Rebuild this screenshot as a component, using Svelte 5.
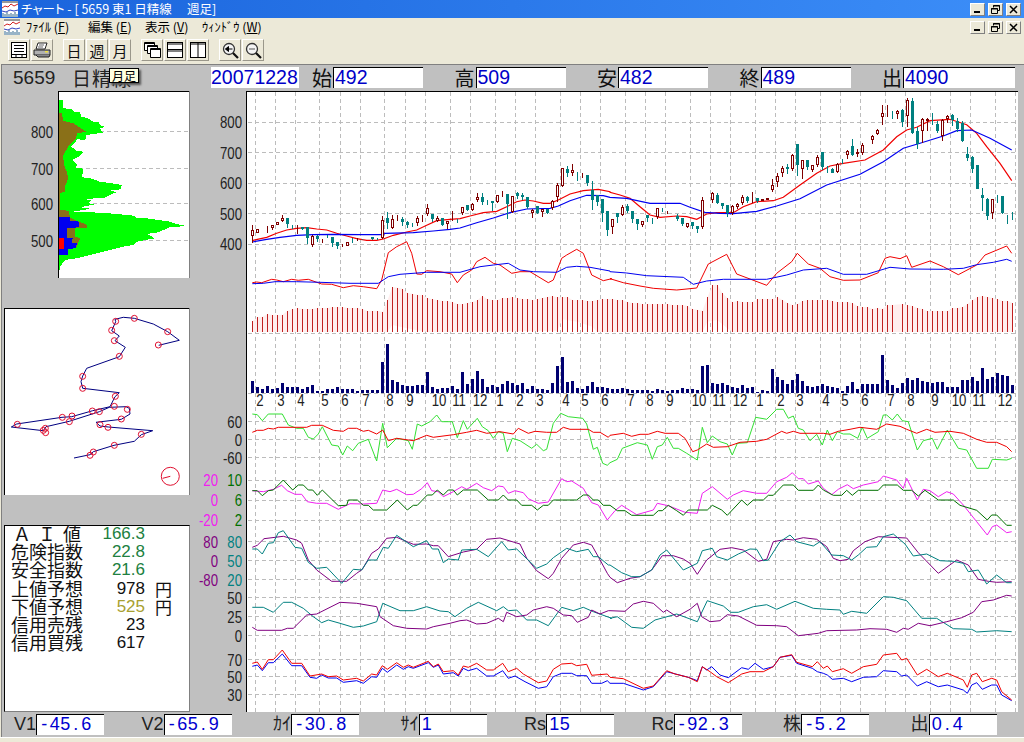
<script>
  // coordinates below were read off at 3x, so z() brings them back to page pixels
  const z = (ox, oy, s) =>
    s.trim().split(/\s+/).map((p) => {
      const [a, b] = p.split(',');
      return (ox + a / 3).toFixed(1) + ',' + (oy + b / 3).toFixed(1);
    }).join(' ');
  const top2 = (a, b) => z(200, 90, a) + ' ' + z(610, 90, b);
  const low2 = (a, b) => z(200, 400, a) + ' ' + z(610, 400, b);

  const vLines = [255.5,275.5,295.5,319.5,340.5,360.5,384.5,405.5,425.5,450.5,470.5,495.5,515.5,535.5,560.5,580.5,600.5,625.5,645.5,665.5,690.5,710.5,730.5,755.5,775.5,795.5,820.5,840.5,860.5,885.5,905.5,930.5,950.5,970.5,995.5,1015.5];
  const hLines = [122.5,152.5,183.5,213.5,244.5,333.5,393.5,421.5,439.5,457.5,480.5,500.5,520.5,541.5,560.5,579.5,597.5,616.5,635.5,659.5,676.5,694.5];

  const axis = [
    ['800',242,122,'#222'],['700',242,153,'#222'],['600',242,183,'#222'],['500',242,214,'#222'],['400',242,244,'#222'],
    ['60',242,422,'#222'],['0',242,440,'#222'],['-60',242,458,'#222'],
    ['20',218,480,'#f020f0'],['0',218,500,'#f020f0'],['-20',218,520,'#f020f0'],
    ['10',242,480,'#007000'],['6',242,500,'#007000'],['2',242,520,'#007000'],
    ['80',218,542,'#800080'],['0',218,561,'#800080'],['-80',218,580,'#800080'],
    ['80',242,542,'#008080'],['50',242,561,'#008080'],['20',242,580,'#008080'],
    ['50',242,598,'#222'],['25',242,617,'#222'],['0',242,636,'#222'],
    ['70',242,660,'#222'],['50',242,677,'#222'],['30',242,695,'#222']
  ];

  const months = [
    [260,'2'],[281,'3'],[301,'4'],[325,'5'],[345,'6'],[366,'7'],[390,'8'],[410,'9'],[439,'10'],[459,'11'],[480,'12'],[500,'1'],[520,'2'],[540,'3'],[566,'4'],[585,'5'],[605,'6'],
    [631,'7'],[650,'8'],[670,'9'],[699,'10'],[719,'11'],[740,'12'],[760,'1'],[781,'2'],[800,'3'],[826,'4'],[845,'5'],[865,'6'],[891,'7'],[911,'8'],[935,'9'],[959,'10'],[979,'11'],[1005,'12']
  ];

  // body top, body bottom, high, low (3x y, page y = 90 + v/3); one bar every 5px
  const candleData = `u420,438,405,458 u418,430,418,430 - u414,416,408,428 u406,414,406,420 u397,405,397,405 u384,394,376,396 d384,403,384,414
    d410,413,405,416 u413,418,405,432 d412,418,410,420 d412,443,412,462 u438,466,436,470 d438,448,436,455 u448,450,448,460 d438,440,434,444
    d441,458,441,470 d456,468,456,478 u464,466,462,472 u455,468,455,468 d445,447,445,458 u446,448,444,452 d447,448,447,450 d446,447,446,448
    d442,446,442,450 d445,447,445,450 u390,445,378,448 d384,400,366,416 u388,413,374,416 u384,387,376,392 d386,396,380,408 d397,405,394,414
    d404,405,398,412 u384,398,378,408 u378,382,376,396 u354,372,342,378 d373,388,373,396 u383,392,378,396 d385,404,385,408 u394,403,392,418
    u386,388,364,392 d386,388,386,398 u352,368,350,374 d346,360,346,364 u342,360,338,362 u321,330,310,336 d321,336,310,344 d331,333,331,344
    d334,338,334,364 u316,336,316,340 u308,312,304,320 d313,343,313,386 u318,365,318,368 d308,318,306,328 d316,320,308,330 d322,352,322,356
    u360,368,358,384 d348,370,348,372 u358,367,356,380 d358,368,356,372 u332,355,330,360 u285,320,280,335 u233,288,233,290 d236,250,228,262
    u240,248,222,258 d245,247,245,272 u254,258,250,264 d255,280,255,288 d300,330,274,360 d316,335,316,348 d328,370,328,396 d364,420,364,438
    u388,410,388,432 d370,382,370,398 u350,375,345,378 d348,362,342,368 d364,388,364,398 d388,402,388,420 u394,404,392,412 d376,384,376,396
    d384,385,384,402 u355,382,355,388 d355,358,355,366 u366,367,362,372 - d378,386,372,392 d384,402,384,408 u400,410,400,414
    d396,408,396,418 d408,418,408,428 u330,410,322,416 - u308,330,305,338 d314,338,310,342 d338,348,338,356 d346,370,346,380
    u348,370,346,376 u342,352,340,356 u320,340,316,344 d320,332,318,340 u324,326,305,340 d325,334,325,340 u328,334,328,334 u323,330,323,330
    u286,300,268,306 u258,276,250,290 u233,248,228,262 d232,236,222,252 u194,238,192,242 d162,225,162,258 u211,238,211,268 d211,232,211,240
    u224,241,224,246 u200,224,196,230 d187,230,187,240 d238,239,228,250 d236,248,234,250 u222,246,220,248 d208,210,206,222 u182,196,180,206
    d168,194,146,198 u186,192,176,202 u164,188,160,194 - u138,150,134,162 u120,132,118,134 u70,80,46,104 u60,64,44,80
    d64,66,64,86 u62,72,60,88 d60,96,56,110 u30,78,24,110 d32,128,24,132 d122,162,112,176 u86,122,84,160 u88,92,84,122
    d90,92,68,104 d102,124,94,128 u90,138,88,152 u78,88,74,100 d74,90,72,108 d92,118,84,126 d98,152,94,156 d192,204,170,214
    d202,236,198,248 d226,296,226,298 d314,324,294,364 d326,378,324,390 u328,368,326,386 d316,317,316,338 d318,368,318,372 d376,377,376,402 d378,379,366,390`;

  const px = (i) => Math.round(252.33 + 5 * i);
  const candles = candleData.trim().split(/\s+/).map((c, i) => {
    if (c === '-') return null;
    const [t, b, h, l] = c.slice(1).split(',').map((v) => Math.round(90 + v / 3));
    return { x: px(i), up: c[0] === 'u', t, b, h, l };
  }).filter(Boolean);

  const macdTops = [694,682,680,672,675,675,674,662,658,654,657,657,657,654,654,654,651,651,651,654,654,654,657,663,663,663,665,630,591,593,596,609,611,614,616,624,628,630,633,633,636,642,642,639,636,630,618,628,630,630,624,624,621,624,627,627,630,627,624,621,618,622,621,621,630,630,630,633,633,630,627,627,627,630,630,636,639,639,642,642,642,642,642,642,645,645,645,648,657,659,662,621,585,585,609,624,636,633,636,636,636,627,627,627,627,621,630,639,645,642,633,630,630,630,630,630,633,636,636,636,639,648,651,651,657,654,657,645,645,0,642,645,648,654,657,663,663,663,663,663,654,654,651,642,630,621,618,621,624,627,633,633,639];
  const macd = macdTops.map((t, i) => ({ x: px(i) + 0.5, y: 90 + t / 3 })).filter((b) => b.y > 200);
  const macdBand = macd.map((b) => b.x + ',' + b.y.toFixed(1)).join(' ');
  // lower edge of the pink band, lifts off the base where the bars are tallest
  const macdFloor = z(200, 90, '1252,726 1192,726 1177,710 1132,695 1087,688 1072,722 682,726 637,718 607,712 577,705 562,726 157,726');
  const macdFloorRight = z(610, 90, '1207,726 367,726 352,715 322,690 292,695 277,726 7,726');

  const volTops = [873,892,897,888,897,893,879,890,890,890,897,890,885,903,903,897,897,891,897,897,897,902,900,900,900,900,816,762,870,876,885,889,889,884,884,846,891,896,895,895,888,897,846,882,867,843,867,892,885,890,882,873,879,885,879,897,888,897,897,900,879,828,801,876,873,894,897,888,876,891,891,894,897,897,894,896,900,900,900,900,903,897,900,903,900,900,894,898,896,900,828,825,880,882,879,885,891,894,885,894,891,906,900,903,837,861,870,882,870,852,873,888,891,888,882,888,891,894,903,888,876,897,882,882,882,882,795,870,885,894,879,864,870,864,873,876,879,876,876,891,891,891,870,870,861,873,834,867,861,849,855,857,885];
  const vols = volTops.map((t, i) => ({ x: px(i) - 1, y: Math.round(90 + t / 3) }));

  const series = [
    { c: '#f00000', w: 1.2, p: top2('157,452 172,448 200,442 230,430 260,420 290,415 320,413 350,417 380,420 410,430 440,438 470,446 500,451 530,451 550,447 580,436 620,426 650,420 680,406 710,392 750,388 780,386 810,378 850,368 890,364 920,350 950,335 975,330 1000,333 1030,340 1050,340 1075,330 1110,312 1150,302 1195,298 1230,305', '0,307 30,315 60,325 90,350 120,375 150,382 200,378 230,380 260,388 290,372 320,368 370,368 400,350 440,335 490,332 520,322 570,285 620,250 660,228 700,220 765,210 820,180 860,140 890,120 920,112 960,92 1020,88 1070,104 1100,130 1130,170 1170,220 1205,272') },
    { c: '#0000f0', w: 1.2, p: top2('157,456 200,448 240,442 290,436 340,434 400,433 480,434 550,434 555,430 640,428 700,423 750,418 780,414 830,398 880,384 930,368 980,357 1050,355 1075,348 1110,332 1160,316 1210,317', '0,322 50,325 120,340 210,340 240,352 285,367 330,370 370,371 440,364 500,348 570,326 650,285 750,253 820,215 880,175 930,160 1000,138 1040,122 1085,120 1140,145 1205,180') },
    { c: '#f00000', w: 1, p: top2('157,578 170,576 185,578 215,568 230,570 250,575 275,568 295,571 325,568 345,575 365,582 395,583 430,593 460,587 490,590 530,596 545,570 565,488 590,470 620,455 635,490 650,552 665,553 680,542 720,545 755,552 772,578 790,555 815,540 830,515 855,502 880,520 900,525 935,550 960,545 990,545 1045,578 1060,570 1085,505 1100,495 1130,478 1150,490 1175,555 1210,572 1235,566', '0,566 40,578 90,588 130,595 200,600 260,594 295,522 350,493 380,552 470,586 500,550 545,515 562,490 595,522 630,535 660,560 700,571 750,570 805,548 825,505 840,500 870,506 890,497 905,532 960,513 1000,530 1045,554 1100,525 1125,495 1190,468 1205,490') },
    { c: '#0000f0', w: 1, p: top2('157,581 190,580 225,575 290,575 360,577 450,580 535,580 565,560 600,553 680,547 780,547 840,530 880,525 925,520 960,540 1000,545 1070,547 1100,532 1130,529 1170,532 1230,543', '0,545 50,549 110,557 220,562 250,583 290,573 340,568 470,568 530,555 580,540 650,535 700,553 770,553 840,532 900,537 1000,538 1060,535 1100,524 1150,517 1190,508 1205,514') },
    { c: '#33e033', w: 1, p: low2('157,42 172,44 187,62 205,42 247,42 265,75 290,85 310,85 325,112 340,117 355,102 367,80 395,135 415,138 428,165 442,138 458,152 475,130 505,118 530,183 548,70 562,143 590,115 625,122 637,148 652,72 665,78 690,65 710,45 725,65 757,65 772,113 790,62 802,88 832,55 847,80 865,92 880,115 895,95 910,100 922,155 937,115 960,122 995,145 1010,133 1030,152 1040,148 1060,70 1082,40 1105,50 1148,55 1160,72 1180,148 1192,142 1208,190 1222,196', '0,188 22,178 37,145 82,128 112,135 127,178 142,140 157,135 172,112 190,145 205,145 230,160 262,180 277,82 292,128 307,108 330,125 352,132 367,165 382,130 412,128 437,52 470,58 500,28 520,28 535,55 550,48 565,85 580,90 600,122 620,103 637,135 652,90 667,122 682,95 700,102 720,102 743,115 757,82 772,115 805,95 820,45 830,45 847,60 862,42 877,62 895,65 922,150 940,122 967,115 982,148 1012,90 1045,145 1070,150 1100,205 1135,205 1147,178 1190,180 1205,175') },
    { c: '#f00000', w: 1, p: low2('157,97 172,91 190,91 205,85 220,87 235,82 285,82 320,82 335,76 367,76 400,91 430,94 445,85 470,85 490,94 505,91 530,102 548,90 565,122 590,115 640,122 680,106 700,112 760,104 800,97 830,91 860,100 900,95 940,102 955,85 985,100 1005,94 1040,97 1070,97 1090,82 1110,88 1165,88 1180,97 1200,97 1225,112', '0,106 40,100 65,109 90,103 115,103 142,94 165,100 205,100 225,115 248,155 262,150 290,132 310,142 352,140 390,127 440,124 470,118 515,94 530,100 550,94 570,100 640,100 660,103 685,94 720,88 750,82 800,88 830,72 870,79 890,88 920,100 950,88 975,97 1020,94 1060,100 1100,118 1130,127 1160,127 1190,140 1205,155') },
    { c: '#f020f0', w: 1, p: low2('157,272 190,275 220,268 245,256 262,272 285,283 305,283 322,305 350,310 380,310 415,328 450,311 490,312 530,310 548,270 570,275 590,268 620,284 640,283 665,266 682,248 695,272 715,275 730,290 760,275 785,260 800,268 830,250 850,263 875,272 895,258 910,260 925,280 945,272 970,278 985,296 1015,310 1045,306 1085,236 1100,245 1115,243 1150,265 1175,308 1195,315 1222,360', '0,350 15,332 35,316 80,344 130,330 142,310 175,317 225,337 262,340 277,280 307,260 352,298 370,285 400,272 440,280 470,280 500,245 530,232 547,218 565,236 580,236 595,252 625,243 640,265 665,284 685,268 712,254 730,266 760,255 805,245 820,228 860,240 880,265 890,235 922,300 940,268 960,272 985,290 1010,275 1030,282 1060,315 1100,365 1132,405 1147,380 1160,375 1190,398 1205,395') },
    { c: '#007000', w: 1, p: low2('157,272 172,272 187,287 205,272 220,270 250,240 278,270 295,255 310,255 325,270 338,270 352,286 367,270 415,317 440,316 445,300 472,300 490,316 505,316 520,330 560,330 592,300 622,330 640,316 652,316 682,285 697,285 712,270 730,285 745,270 760,270 772,285 790,270 832,270 865,300 895,300 910,285 925,300 950,300 965,316 995,316 1012,330 1030,316 1045,316 1060,300 1130,300 1150,285 1165,285 1180,300 1195,300 1210,316', '0,316 22,332 45,332 65,346 130,346 145,332 157,332 175,316 200,332 220,346 235,330 292,330 307,316 335,330 352,346 395,300 412,316 430,300 460,300 475,286 490,286 520,255 550,255 565,271 610,271 625,255 640,270 670,286 695,286 710,271 727,286 745,271 805,271 820,255 862,255 880,271 905,271 925,288 945,271 985,300 1030,300 1050,316 1100,331 1132,360 1145,345 1160,345 1190,376 1205,376') },
    { c: '#800080', w: 1, p: low2('157,442 172,436 192,416 250,409 290,420 305,430 325,480 350,510 395,544 440,544 470,520 487,508 515,460 535,447 560,415 590,412 640,433 680,432 700,437 715,437 745,470 790,456 830,448 860,418 900,414 960,432 980,475 1010,512 1045,536 1060,520 1085,475 1120,435 1150,427 1175,435 1195,470 1222,520', '0,532 22,548 60,535 90,530 125,510 157,467 190,467 220,477 240,490 262,523 290,480 330,448 365,443 400,450 445,484 470,478 490,425 530,418 550,420 580,413 620,418 650,440 670,475 690,482 715,478 730,452 765,425 805,410 890,414 925,458 985,520 1040,480 1075,495 1105,538 1135,544 1160,547 1205,545') },
    { c: '#008080', w: 1, p: low2('157,447 172,447 187,462 205,430 220,428 235,398 250,392 285,442 305,445 325,487 350,505 380,502 425,550 460,508 485,510 505,480 530,480 550,442 565,445 590,406 640,440 680,422 697,447 715,447 730,488 745,477 775,480 785,450 830,448 865,470 905,425 925,450 950,447 1010,505 1040,492 1060,473 1100,445 1130,455 1165,448 1180,470 1195,470 1225,495', '0,495 35,518 65,530 90,530 125,510 150,465 170,450 220,510 262,490 277,452 307,445 320,470 352,480 385,462 420,447 440,448 460,482 475,480 510,425 540,405 560,425 610,438 630,425 665,465 700,467 725,480 745,465 770,442 800,440 820,410 850,402 885,432 910,468 950,462 990,482 1030,484 1060,490 1075,515 1105,510 1130,552 1160,525 1190,548 1205,548') },
    { c: '#008080', w: 1, p: low2('157,622 190,622 220,637 250,607 275,607 310,625 340,650 365,668 385,660 420,670 460,682 490,678 530,665 548,610 600,632 640,632 680,620 720,633 745,635 765,650 800,625 835,607 890,632 910,620 925,632 950,630 980,660 1010,660 1045,677 1085,622 1120,632 1150,622 1180,635 1235,655', '0,655 22,650 65,682 100,685 135,660 200,642 262,665 292,602 340,618 362,637 385,637 430,620 470,614 500,628 555,604 610,625 650,628 690,630 700,643 725,634 770,640 820,590 850,592 890,602 935,655 980,655 1030,686 1085,688 1100,696 1160,692 1205,695') },
    { c: '#800080', w: 1, p: low2('157,682 172,691 245,691 262,685 280,685 320,645 350,642 420,607 470,610 530,620 540,650 580,677 620,685 680,687 700,680 750,670 780,662 800,660 830,672 860,670 895,655 910,665 920,637 950,650 980,645 1000,630 1040,620 1060,625 1090,645 1115,647 1132,667 1165,652 1175,630 1200,642 1225,632', '0,632 45,634 70,612 100,604 130,610 160,637 170,630 200,650 240,628 262,610 275,650 300,665 330,662 352,644 385,648 440,676 500,677 530,680 565,707 625,700 650,692 740,690 780,686 830,688 860,697 880,685 895,688 925,670 960,677 1010,665 1055,653 1090,637 1115,605 1150,600 1190,586 1205,588') },
    { c: '#0000f0', w: 1, p: low2('157,799 172,795 187,812 205,788 220,788 247,762 275,797 305,797 330,832 350,835 365,825 385,834 410,834 430,847 470,842 490,850 515,830 530,832 547,805 562,817 590,795 610,808 625,800 640,805 685,788 700,802 715,795 730,822 760,818 775,828 790,805 805,812 830,805 860,828 880,828 908,812 925,835 945,828 975,845 1015,865 1040,860 1060,830 1085,820 1115,820 1130,827 1160,827 1175,850 1205,850 1222,842', '0,850 40,850 100,870 130,860 170,815 235,832 262,842 277,800 290,810 305,800 330,825 355,833 395,803 415,808 435,790 460,808 490,800 510,772 545,766 560,790 607,805 622,815 640,820 652,825 667,838 700,835 725,845 760,832 800,830 820,812 860,815 875,828 890,825 922,858 950,845 985,860 1012,855 1060,870 1072,880 1085,855 1100,848 1117,868 1145,855 1160,855 1175,885 1205,902') },
    { c: '#f00000', w: 1, p: low2('157,790 172,786 187,808 205,779 220,779 247,750 275,790 305,790 330,828 365,822 385,830 410,828 430,840 470,835 490,843 515,822 530,825 547,797 562,808 590,788 610,802 625,795 640,802 685,784 700,800 715,792 730,815 760,812 775,825 790,798 805,802 830,790 860,810 880,810 908,790 925,815 950,805 970,822 1015,848 1040,843 1060,808 1085,792 1115,790 1130,797 1160,793 1175,826 1222,822', '0,832 40,836 100,865 130,858 170,812 195,822 235,832 262,845 277,800 300,815 320,830 355,848 395,822 420,815 460,815 490,800 510,772 545,764 560,787 607,800 622,785 640,805 652,798 667,815 700,806 725,820 760,800 800,793 820,765 860,760 875,780 890,775 922,825 950,808 985,830 1012,820 1060,840 1072,862 1085,825 1100,820 1117,845 1145,835 1160,840 1175,875 1205,900') }
  ];

  const histGreen = z(0, 90, '176,30 188,30 190,54 214,58 222,66 240,66 244,80 262,84 280,95 296,96 300,105 315,110 300,116 310,128 280,132 258,135 256,150 232,148 226,156 214,170 230,182 250,185 240,198 216,210 232,224 226,232 250,236 246,262 268,264 300,275 336,280 365,285 362,298 330,302 350,306 310,325 252,326 275,332 262,340 290,342 240,352 272,356 220,365 300,368 352,372 410,378 400,382 440,385 510,395 530,402 560,408 510,412 470,428 440,432 465,445 410,455 400,465 370,470 330,480 290,490 230,505 195,510 180,530 176,560');
  const histBrown = z(0, 90, '176,70 185,70 190,92 220,100 258,125 232,130 225,150 205,170 190,195 190,205 192,225 200,245 205,265 195,290 195,305 180,310 180,360 205,362 210,382 230,392 262,405 262,414 225,415 225,440 240,445 230,470 176,480');
  const histBlue = z(0, 90, '176,382 210,382 210,392 238,395 236,412 200,415 200,445 218,445 216,458 230,460 228,474 204,478 204,494 176,494');
  const histRed = z(0, 90, '176,445 192,445 192,478 176,478');
  const histAxis = [['800', 132], ['700', 169], ['600', 204], ['500', 241]];

  const path = z(0, 300, '222,474 270,464 280,455 342,436 403,424 424,404 458,392 325,381 300,378 288,367 364,358 390,342 388,325 378,320 328,322 298,335 208,364 138,380 130,392 34,381 50,372 186,352 215,350 278,332 330,320 345,290 358,278 248,265 243,245 248,228 260,205 358,170 376,142 345,122 358,108 335,92 347,65 345,58 370,52 403,55 460,72 503,95 538,121 476,136');
  const rings = [[475,135],[503,95],[403,55],[347,64],[335,91],[343,122],[358,169],[248,229],[248,265],[346,289],[343,319],[382,328],[364,357],[300,374],[324,382],[424,403],[343,436],[280,456],[270,466],[137,398],[130,391],[136,385],[52,373],[187,352],[216,348],[208,365],[277,333],[298,335]];

  const stats = [
    { label: 'Ａ Ｉ 値', value: '166.3', tone: 'good', wide: true },
    { label: '危険指数', value: '22.8', tone: 'good' },
    { label: '安全指数', value: '21.6', tone: 'good' },
    { label: '上値予想', value: '978', unit: '円' },
    { label: '下値予想', value: '525', tone: 'warn', unit: '円' },
    { label: '信用売残', value: '23' },
    { label: '信用買残', value: '617' }
  ];

  const prices = [
    { label: '始', value: '492', first: true },
    { label: '高', value: '509' },
    { label: '安', value: '482' },
    { label: '終', value: '489' },
    { label: '出', value: '4090', last: true }
  ];

  const ratios = [
    ['V1', '-45.6'], ['V2', '-65.9'], ['ｶｲ', '-30.8'], ['ｻｲ', '1'],
    ['Rs', '15'], ['Rc', '-92.3'], ['株', '-5.2'], ['出', '0.4']
  ];
</script>

{#snippet appIcon()}
  <svg class="appicon" width="16" height="16" viewBox="0 0 16 16">
    <rect width="16" height="16" fill="#fff" />
    <rect y="0" width="16" height="2" fill="#9a9a9a" />
    <path d="M0 7l3-2 3 1 3-3 3 2 4-2" fill="none" stroke="#d02020" />
    <path d="M0 10l4 1 4-2 4 1 4-1" fill="none" stroke="#3040c0" />
    <path d="M1 16v-4M3 16v-3M5 16v-5M7 16v-3M9 16v-4M11 16v-3M13 16v-5M15 16v-3" stroke="#306890" />
  </svg>
{/snippet}

{#snippet winButtons()}
  <div class="winbtns">
    <button class="winbtn" aria-label="minimize"><svg width="9" height="9" viewBox="0 0 9 9"><rect x="1" y="6" width="6" height="2" /></svg></button>
    <button class="winbtn" aria-label="restore"><svg width="9" height="9" viewBox="0 0 9 9"><path d="M2.5 2.5V.5h6v5h-2M.5 3.5h6v5h-6z" fill="none" stroke="#000" /><path d="M2 1h7M0 4h7" stroke="#000" /></svg></button>
    <button class="winbtn" aria-label="close"><svg width="9" height="9" viewBox="0 0 9 9"><path d="M1 1l7 7M8 1l-7 7" stroke="#000" stroke-width="1.5" /></svg></button>
  </div>
{/snippet}

<div class="window">
  <div class="titlebar">
    {@render appIcon()}
    <span class="title">チャート - [ 5659 東1 日精線　 週足]</span>
    {@render winButtons()}
  </div>

  <div class="menubar">
    {@render appIcon()}
    <span class="menu m1">ﾌｧｲﾙ (<u>F</u>)</span>
    <span class="menu m2">編集 (<u>E</u>)</span>
    <span class="menu m3">表示 (<u>V</u>)</span>
    <span class="menu m4">ｳｨﾝﾄﾞｳ (<u>W</u>)</span>
    {@render winButtons()}
  </div>

  <div class="toolbar">
    <button class="tool" aria-label="list">
      <svg width="16" height="16" viewBox="0 0 16 16"><rect x=".5" y=".5" width="15" height="15" fill="#fff" stroke="#000" /><path d="M3 3.5h10M3 6.5h10M3 9.5h10" stroke="#000" /><rect x="1" y="12" width="14" height="1" fill="#000" /><path d="M5 13v2M11 13v2" stroke="#000" /></svg>
    </button>
    <button class="tool" aria-label="print">
      <svg width="18" height="16" viewBox="0 0 18 16"><path d="M5 1h9l-2 6H3z" fill="#fff" stroke="#222" /><path d="M1 8h16v5H1z" fill="#b0b0b0" stroke="#222" /><path d="M3 13l2 2h11l1-2" fill="#888" stroke="#222" /><rect x="12" y="9" width="3" height="1.5" fill="#f0e040" /><path d="M6 3h5M5 5h5" stroke="#666" /></svg>
    </button>
    <button class="tool txt gap">日</button>
    <button class="tool txt">週</button>
    <button class="tool txt">月</button>
    <button class="tool gap" aria-label="cascade">
      <svg width="17" height="16" viewBox="0 0 17 16"><path d="M.5.5h10v8H.5z" fill="#fff" stroke="#000" /><path d="M.5 1.5h10" stroke="#000" /><path d="M3.5 3.5h10v8h-10z" fill="#fff" stroke="#000" /><path d="M3.5 4.5h10" stroke="#000" /><path d="M6.5 6.5h10v9h-10z" fill="#fff" stroke="#000" /><path d="M6.5 7.5h10" stroke="#000" /></svg>
    </button>
    <button class="tool" aria-label="split horizontal">
      <svg width="16" height="16" viewBox="0 0 16 16"><rect x=".5" y=".5" width="15" height="15" fill="#fff" stroke="#000" /><path d="M0 2h16M0 7.5h16M0 9h16" stroke="#000" /></svg>
    </button>
    <button class="tool" aria-label="split vertical">
      <svg width="16" height="16" viewBox="0 0 16 16"><rect x=".5" y=".5" width="15" height="15" fill="#fff" stroke="#000" /><path d="M0 2h16M8 0v16" stroke="#000" /></svg>
    </button>
    <button class="tool gap" aria-label="zoom back">
      <svg width="17" height="17" viewBox="0 0 17 17"><circle cx="7" cy="7" r="5.5" fill="#f4f4f4" stroke="#333" stroke-width="1.3" /><path d="M11 11l5 5" stroke="#111" stroke-width="2.2" /><path d="M3.5 7h7M3.5 7l3-2.5v5z" stroke="#000" /></svg>
    </button>
    <button class="tool" aria-label="zoom">
      <svg width="17" height="17" viewBox="0 0 17 17"><circle cx="7" cy="7" r="5.5" fill="#f4f4f4" stroke="#333" stroke-width="1.3" /><path d="M11 11l5 5" stroke="#111" stroke-width="2.2" /><path d="M4 7h6" stroke="#555" /></svg>
    </button>
  </div>

  <div class="client">
    <div class="tip">月足</div>

    <div class="pricerow">
      <div class="symbol"><span class="code">5659</span><span class="name">日精線</span></div>
      <div class="date">20071228</div>
      {#each prices as p}
        <span class="plabel" class:first={p.first}>{p.label}</span>
        <span class="pbox" class:last={p.last}>{p.value}</span>
      {/each}
    </div>

    <div class="middle">
      <div class="side">
        <svg class="sidepanel" width="190" height="187" viewBox="0 91 190 187">
          <rect x="58" y="91" width="131" height="187" fill="#fff" />
          {#each histAxis as [t, y]}
            <path d="M58 {y - 0.5}H188" class="dash" />
            <text class="ax" transform="translate(53 {y + 6}) scale(.8 1)" text-anchor="end" fill="#222">{t}</text>
          {/each}
          <g class="steps">
            <polygon points={histGreen} fill="#00ff00" />
            <polygon points={histBrown} fill="#8a7018" />
            <polygon points={histBlue} fill="#0000f0" />
            <polygon points={histRed} fill="#ff0000" />
          </g>
          <path d="M58.5 278V91.5H189" class="edge" />
          <path d="M189.5 91V278.5H58" class="edge soft" />
        </svg>

        <svg class="sidepanel" width="190" height="187" viewBox="0 308 190 187">
          <rect x="4" y="308" width="185" height="187" fill="#fff" />
          <polyline points={path} fill="none" stroke="#000080" />
          {#each rings as [x, y]}
            <circle cx={x / 3} cy={300 + y / 3} r="3" fill="none" stroke="#e01030" />
          {/each}
          <circle cx="170.3" cy="476.3" r="9" fill="none" stroke="#e01030" />
          <path d="M162.7 478.3L170.3 476.3" stroke="#e01030" />
          <path d="M4.5 495V308.5H189" class="edge" />
          <path d="M189.5 308V495.5H4" class="edge soft" />
        </svg>

        <div class="stats">
          {#each stats as s}
            <div class="stat">
              <span class="slabel" class:wide={s.wide}>{s.label}</span>
              <span class="svalue {s.tone ?? ''}">{s.value}</span>
              <span class="sunit">{s.unit ?? ''}</span>
            </div>
          {/each}
        </div>
      </div>

      <svg class="chart" width="828" height="621" viewBox="190 91 828 621">
        <rect x="247" y="91" width="771" height="621" fill="#fff" />
        {#each vLines as x}<path d="M{x} 92V712" class="dash" />{/each}
        {#each hLines as y}<path d="M248 {y}H1018" class="dash" />{/each}

        {#each axis as [t, x, y, c]}
          <text class="ax" transform="translate({x} {y + 6}) scale(.8 1)" text-anchor="end" fill={c}>{t}</text>
        {/each}
        {#each months as [x, t]}
          <text class="ax" transform="translate({x} 406) scale(.8 1)" text-anchor="middle" fill="#222">{t}</text>
        {/each}

        <polygon points={macdBand + ' ' + macdFloorRight + ' ' + macdFloor} fill="#ffeeee" />
        {#each macd as b}
          <path d="M{b.x} {b.y}V332" class="macd" />
        {/each}

        {#each vols as v}
          <rect x={v.x} y={v.y} width="3" height={393 - v.y} fill="#000070" />
        {/each}

        {#each series as s}
          <polyline points={s.p} fill="none" stroke={s.c} stroke-width={s.w} />
        {/each}

        {#each candles as c}
          <g class="candle">
            <path d="M{c.x + 0.5} {c.h}V{c.l}" stroke={c.up ? '#800000' : '#008080'} />
            <rect x={c.x - 0.5} y={c.t + 0.5} width="2" height={Math.max(c.b - c.t - 1, 0)} fill={c.up ? '#fff' : '#008080'} stroke={c.up ? '#800000' : '#008080'} />
          </g>
        {/each}

        <path d="M246.5 712V91.5H1018" class="edge" />
      </svg>
    </div>

    <div class="ratiorow">
      {#each ratios as [label, value]}
        <div class="ratio">
          <span class="rlabel">{label}</span>
          <span class="rbox">{#each value.split('') as ch}<span class="ch">{ch}</span>{/each}</span>
        </div>
      {/each}
    </div>
  </div>

  <div class="statusbar"></div>
</div>

<style>
  :global(body) {
    margin: 0;
    background: #ece9d8;
  }

  .window {
    width: 1024px;
    height: 742px;
    display: flex;
    flex-direction: column;
    overflow: hidden;
    font-family: "Noto Sans CJK JP", "Liberation Sans", sans-serif;
  }

  .titlebar {
    height: 18px;
    display: flex;
    align-items: center;
    padding: 0 3px 0 2px;
    background: linear-gradient(90deg, #1a64dc, #3c8ef8);
    color: #fff;
  }

  .title {
    margin-left: 3px;
    font-size: 12.5px;
    line-height: 18px;
    white-space: pre;
    font-feature-settings: "palt";
  }

  .appicon {
    flex: none;
  }

  .winbtns {
    margin-left: auto;
    display: flex;
    gap: 3px;
  }

  .winbtn {
    width: 15px;
    height: 13px;
    padding: 0;
    display: flex;
    align-items: center;
    justify-content: center;
    background: #ece9d8;
    border: 1px solid;
    border-color: #fff #808080 #808080 #fff;
  }

  .menubar {
    height: 18px;
    display: flex;
    align-items: center;
    padding: 0 3px 0 4px;
    background: #ece9d8;
    font-size: 12.5px;
    color: #000;
  }

  .menu {
    white-space: pre;
    line-height: 18px;
  }

  .m1 { margin-left: 6px; width: 62px; }
  .m2 { width: 57px; }
  .m3 { width: 57px; }

  .toolbar {
    height: 28px;
    display: flex;
    align-items: center;
    gap: 1px;
    padding-left: 8px;
    background: #ece9d8;
  }

  .tool {
    width: 22px;
    height: 22px;
    padding: 0;
    display: flex;
    align-items: center;
    justify-content: center;
    background: #ece9d8;
    border: 1px solid;
    border-color: #fff #9a978a #9a978a #fff;
    font-family: inherit;
    font-size: 15px;
    color: #111;
  }

  .tool.gap {
    margin-left: 9px;
  }

  .client {
    position: relative;
    height: 673px;
    background: #c0c0c0;
    box-shadow: inset 1px 0 #ece9d8, inset 2px 0 #808080, inset 0 1px #808080;
    display: flex;
    flex-direction: column;
  }

  .tip {
    position: absolute;
    left: 109px;
    top: 4px;
    height: 13px;
    padding: 0 2px;
    background: #ffffe1;
    border: 1px solid #000;
    box-shadow: 2px 2px 2px #555;
    font-size: 12px;
    line-height: 13px;
    color: #000;
  }

  .pricerow {
    height: 27px;
    padding-top: 3px;
    box-sizing: border-box;
    display: flex;
    align-items: flex-start;
  }

  .symbol {
    width: 211px;
    padding-left: 13px;
    box-sizing: border-box;
    display: flex;
    color: #222;
    font-size: 19px;
    line-height: 21px;
  }

  .code {
    font-family: "Liberation Sans", sans-serif;
    width: 59px;
  }

  .name {
    letter-spacing: 1px;
  }

  .date,
  .pbox {
    height: 21px;
    box-sizing: border-box;
    background: #fff;
    color: #0000c8;
    font-family: "Liberation Sans", sans-serif;
    font-size: 19.5px;
    line-height: 21px;
  }

  .date {
    width: 88px;
  }

  .pbox {
    width: 90px;
    padding-left: 1px;
    border-top: 1px solid #000;
    border-left: 1px solid #000;
    line-height: 19px;
  }

  .pbox.last {
    width: 112px;
  }

  .plabel {
    width: 52.5px;
    text-align: right;
    padding-right: 1px;
    box-sizing: border-box;
    color: #111;
    font-size: 20px;
    line-height: 21px;
  }

  .plabel.first {
    width: 34px;
  }

  .middle {
    height: 621px;
    display: flex;
  }

  .side {
    width: 190px;
    display: flex;
    flex-direction: column;
    gap: 30px;
  }

  .sidepanel,
  .chart {
    display: block;
  }

  .stats {
    height: 187px;
    margin-left: 4px;
    box-sizing: border-box;
    background: #fff;
    border-top: 1px solid #000;
    border-left: 1px solid #000;
    border-right: 1px solid #808080;
    border-bottom: 1px solid #808080;
    display: grid;
    grid-auto-rows: 18.2px;
    align-content: start;
  }

  .stat {
    display: grid;
    grid-template-columns: 76px 58px 27px;
    padding-left: 6px;
    font-size: 18px;
    line-height: 15px;
    color: #111;
  }

  .slabel {
    white-space: nowrap;
    width: 72px;
    font-size: 18px;
  }

  .slabel.wide {
    text-align: justify;
    text-align-last: justify;
    padding: 0 2px;
    box-sizing: border-box;
  }

  .svalue {
    text-align: right;
    font-family: "Liberation Sans", sans-serif;
    font-size: 17px;
  }

  .svalue.good { color: #208040; }
  .svalue.warn { color: #a8a030; }

  .sunit {
    text-align: right;
    font-size: 17px;
  }

  .ratiorow {
    height: 25px;
    padding: 2px 0 0 13px;
    box-sizing: border-box;
    display: flex;
    gap: 36.5px;
  }

  .ratio {
    display: flex;
    height: 21px;
  }

  .rlabel {
    width: 23px;
    text-align: right;
    white-space: nowrap;
    color: #222;
    font-family: "Liberation Sans", "Noto Sans CJK JP", sans-serif;
    font-size: 18px;
    line-height: 21px;
  }

  .rbox {
    width: 68px;
    box-sizing: border-box;
    padding-left: 2px;
    background: #fff;
    border-top: 1px solid #000;
    border-left: 1px solid #000;
    display: flex;
    color: #0000d0;
    font-family: "Liberation Sans", sans-serif;
    font-size: 18px;
    line-height: 19px;
  }

  .ch {
    width: 10.5px;
    text-align: center;
  }

  .statusbar {
    flex: 1;
    background: #ece9d8;
    border-top: 1px solid #fff;
  }

  .dash {
    stroke: #bcbcbc;
    stroke-dasharray: 4 3;
    fill: none;
    shape-rendering: crispEdges;
  }

  .edge {
    stroke: #000;
    fill: none;
    shape-rendering: crispEdges;
  }

  .edge.soft {
    stroke: #808080;
  }

  .steps {
    shape-rendering: crispEdges;
  }

  .ax {
    font-family: "Liberation Sans", sans-serif;
    font-size: 16.5px;
  }

  .macd {
    stroke: #c02020;
    shape-rendering: crispEdges;
  }

  .candle {
    shape-rendering: crispEdges;
  }
</style>
